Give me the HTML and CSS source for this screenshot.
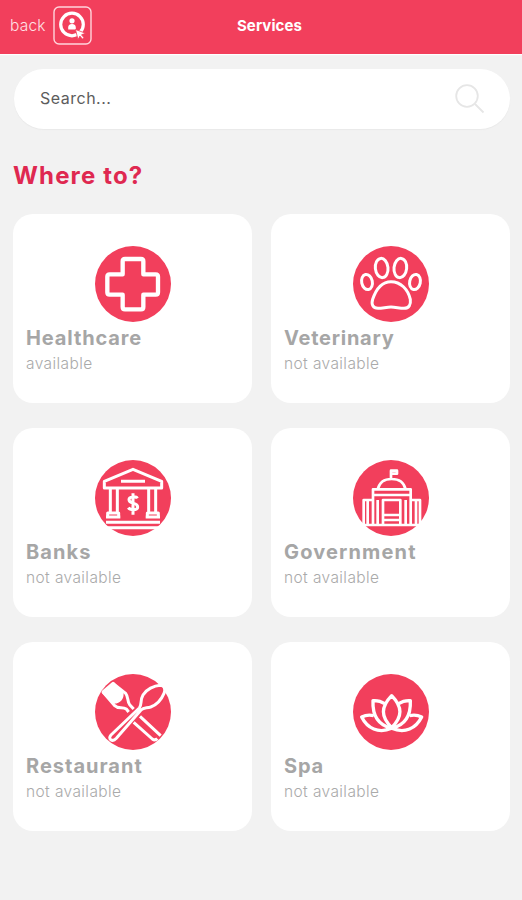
FILE: index.html
```html
<!DOCTYPE html>
<html lang="en">
<head>
<meta charset="utf-8">
<title>Services</title>
<link rel="stylesheet" href="styles.css">
</head>
<body>
<header class="topbar">
  <a class="back">back</a>
  <svg class="logo" viewBox="0 0 39 39">
    <rect x="1" y="1" width="37" height="37" rx="5" fill="none" stroke="#ffd5dc" stroke-width="1.4"/>
    <circle cx="19" cy="18.5" r="11.3" fill="none" stroke="#fff" stroke-width="3.2"/>
    <circle cx="19" cy="14.8" r="2.6" fill="#fff"/>
    <path d="M15.2 23.500v-2c0-2 1.200-3.500 3.800-3.500s3.800 1.500 3.800 3.500v2z" fill="#fff"/>
    <path d="M22.500 23.500l10 3.700-4 1.600 2.500 3-1.600 1.300-2.500-3-1.900 3.500z" fill="#fff" stroke="#f23f5c" stroke-width=".8"/>
  </svg>
  <h1 class="title">Services</h1>
</header>
<main class="page">
  <div class="search">
    <span>Search...</span>
    <svg class="glass" viewBox="0 0 30 30"><circle cx="12" cy="12" r="10.800"/><path d="M20 20l8.500 8.500"/></svg>
  </div>
  <h2 class="heading">Where to?</h2>
  <section class="grid">
    <article class="card">
      <svg class="icon" viewBox="29 18 228 228"><circle class="disc" cx="143" cy="132" r="114"/>
        <path stroke-width="13" d="M119 57h48q7 0 7 7v39h37q7 0 7 7v47q0 7-7 7h-37v37q0 7-7 7h-48q-7 0-7-7v-37H73q-7 0-7-7v-47q0-7 7-7h39V64q0-7 7-7z"/></svg>
      <h3 class="name healthcare">Healthcare</h3><p class="status">available</p>
    </article>
    <article class="card">
      <svg class="icon" viewBox="29 18 228 228"><circle class="disc" cx="143" cy="132" r="114"/>
        <g stroke-width="9"><ellipse cx="115" cy="84" rx="19" ry="29" transform="rotate(-6 115 84)"/><ellipse cx="171" cy="84" rx="19" ry="29" transform="rotate(6 171 84)"/><ellipse cx="71" cy="126" rx="16" ry="23" transform="rotate(-12 71 126)"/><ellipse cx="215" cy="126" rx="16" ry="23" transform="rotate(12 215 126)"/>
        <path d="M143 125c-29 0-45 23-55 53-5 16 1 27 16 27 14 0 25-4 39-4s25 4 39 4c15 0 21-11 19-27-7-30-29-53-58-53z"/></g></svg>
      <h3 class="name veterinary">Veterinary</h3><p class="status">not available</p>
    </article>
    <article class="card">
      <svg class="icon" viewBox="29 18 228 228"><circle class="disc" cx="143" cy="132" r="114"/>
        <g stroke-width="9"><path d="M57 82l86-36 86 36v20H57zM107 82h72M75 102v75M96 102v75M190 102v75M211 102v75M67 189v-12h33v12zM186 189v-12h33v12zM62 189h43M181 189h43M62 205h162M66 221h154"/>
        <path d="M156 133c-3-6-25-7-25 4 0 14 26 7 26 22 0 11-23 10-28 2M143 118v64"/></g></svg>
      <h3 class="name banks">Banks</h3><p class="status">not available</p>
    </article>
    <article class="card">
      <svg class="icon" viewBox="29 18 228 228"><circle class="disc" cx="143" cy="132" r="114"/>
        <g stroke-width="8"><path d="M143 76V50h18v9h-14M103 106c5-21 21-31 42-31s37 10 42 31M89 123v-17h113v17M89 213v-90h113v90M61 213v-75h28M202 138h28v75M50 213h188M73 138v75M103 138v75M119 213v-75h52v75M187 138v75M218 138v75M119 183h52M119 198h52"/></g></svg>
      <h3 class="name government">Government</h3><p class="status">not available</p>
    </article>
    <article class="card">
      <svg class="icon" viewBox="29 18 228 228"><circle class="disc" cx="143" cy="132" r="114"/>
        <g stroke-width="9"><path class="solid" d="M53 72l30-26 27 30c2 14-8 26-23 26-10-4-22-18-34-30z"/><path d="M83 46l38 30c9 11 4 24 12 34l12 13M53 72l34 40c12 12 24 3 36 11l7 9M164 145l62 58M145 163l56 50q8 6 15-1"/>
        <path class="handle" d="M77 201l85-81c8-9 2-24 11-39 10-17 33-28 52-29 13 1 16 12 11 24-8 19-21 34-40 41-13 4-21 1-29 9l-74 85c-12 13-27 2-16-10z"/></g></svg>
      <h3 class="name restaurant">Restaurant</h3><p class="status">not available</p>
    </article>
    <article class="card">
      <svg class="icon" viewBox="29 18 228 228"><circle class="disc" cx="143" cy="132" r="114"/>
        <g stroke-width="10"><path d="M145 179c-33-33-33-62 0-96 33 34 33 63 0 96zM124 107c-12-8-23-10-35-9-2 44 13 73 56 83M166 107c12-8 23-10 35-9 2 44-13 73-56 83M91 143c-12-3-24-2-36 4 17 34 50 51 90 34M199 143c12-3 24-2 36 4-17 34-50 51-90 34"/></g></svg>
      <h3 class="name spa">Spa</h3><p class="status">not available</p>
    </article>
  </section>
</main>
</body>
</html>
```
FILE: styles.css
```css
* { box-sizing: border-box; }
body { margin: 0; background: #f2f2f2; font-family: Inter, "Liberation Sans", sans-serif; }
h1, h2, h3, p { margin: 0; }
.topbar { height: 54px; background: #f23f5c; display: grid; grid-template-columns: 43px 39px 1fr 82px; align-items: center; padding: 0 10px; color: #fff; box-shadow: 0 1px 1px #fff; padding-bottom: 3px; }
.back { font-size: 15.5px; line-height: 20px; font-weight: 300; letter-spacing: .2px; color: #ffe0e5; }
.logo { width: 39px; height: 39px; }
.title { font-size: 15px; line-height: 20px; font-weight: 700; letter-spacing: .1px; text-align: center; padding-left: 17px; }
.page { padding: 15px 12px 0 13px; }
.search { height: 60px; margin-left: 1px; background: #fff; border-radius: 30px; display: flex; align-items: center; justify-content: space-between; padding: 0 25px 0 26px; font-size: 16px; letter-spacing: .5px; color: #5c5c5c; box-shadow: 0 1px 1px #e9e9e9; }
.search span { padding-bottom: 2px; }
.glass { width: 30px; height: 30px; fill: none; stroke: #e6e6e6; stroke-width: 1.8; }
.heading { margin-top: 32px; font-size: 24px; line-height: 30px; font-weight: 700; letter-spacing: 1.15px; color: #df2850; }
.grid { margin-top: 23px; display: grid; grid-template-columns: 1fr 1fr; gap: 25px 19px; }
.card { height: 189px; background: #fff; border-radius: 20px; padding: 32px 13px 0; }
.icon { display: block; width: 76px; height: 76px; margin: 0 auto; fill: none; stroke: #fff; stroke-linejoin: round; }
.disc { fill: #f23f5c; stroke: none; }
.handle { fill: #f23f5c; }
.solid { fill: #fff; }
.name { margin-top: 4px; font-size: 20px; line-height: 24px; font-weight: 700; color: #a6a6a6; }
.healthcare { letter-spacing: .88px; }
.veterinary { letter-spacing: .75px; }
.banks { letter-spacing: 1.1px; }
.government { letter-spacing: 1.15px; }
.restaurant { letter-spacing: 1px; }
.spa { letter-spacing: .8px; }
.status { margin-top: 4px; font-size: 15.5px; line-height: 20px; font-weight: 300; letter-spacing: .4px; color: #aaa; }
```
